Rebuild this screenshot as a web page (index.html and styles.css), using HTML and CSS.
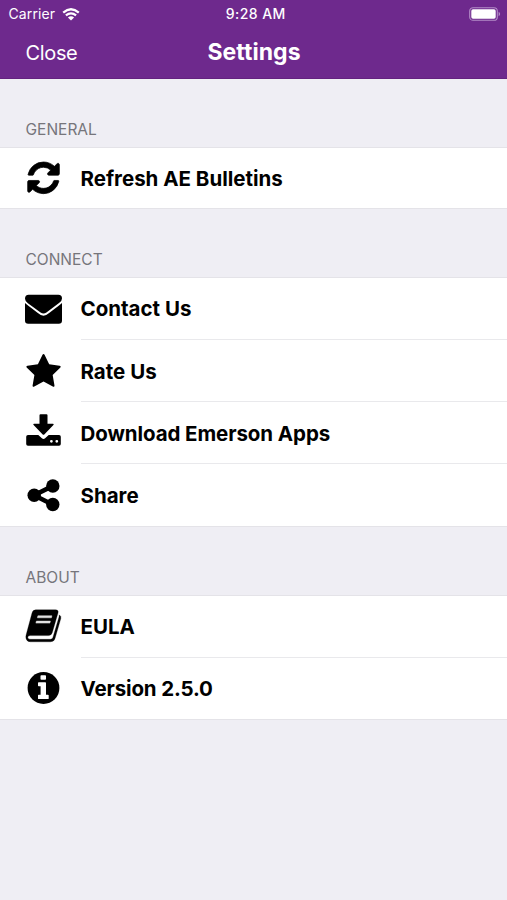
FILE: index.html
```html
<!DOCTYPE html>
<html lang="en">
<head>
<meta charset="utf-8">
<title>Settings</title>
<link rel="stylesheet" href="styles.css">
</head>
<body>
<header class="header">
  <div class="status">
    <div class="carrier"><span>Carrier</span>
      <svg class="wifi" viewBox="0 0 18 13"><path d="M1.2 4.600Q9-2 16.800 4.600M3.900 7.400q5.100-4.100 10.200 0" fill="none" stroke="#fff" stroke-width="2.300"/><path d="M5.900 9.600q3.100-2.500 6.200 0L9 12.600z" fill="#fff"/></svg>
    </div>
    <time class="time">9:28 AM</time>
    <svg class="battery" viewBox="0 0 32 14"><rect x=".7" y=".7" width="27.600" height="12.600" rx="3.400" fill="none" stroke="#b48dc8" stroke-width="1.100"/><rect x="2.300" y="2.300" width="24.400" height="9.400" rx="1.700" fill="#fff"/><path d="M29.600 4.800q1.500.7 1.500 2.200t-1.500 2.200z" fill="#b48dc8"/></svg>
  </div>
  <nav class="nav"><a class="close">Close</a><h1 class="title">Settings</h1></nav>
</header>
<main>
  <h2 class="label">GENERAL</h2>
  <ul class="list single">
    <li class="row"><svg class="icon" viewBox="0.500 0 40 40"><path transform="translate(4.200 4) scale(.0206)" d="M1511 928q0 5-1 7-64 268-268 434.500t-478 166.500q-146 0-282.500-55t-243.500-157l-129 129q-19 19-45 19t-45-19-19-45v-448q0-26 19-45t45-19h448q26 0 45 19t19 45-19 45l-137 137q71 66 161 102t187 36q134 0 250-65t186-179q11-17 53-117 8-23 30-23h192q13 0 22.500 9.500t9.500 22.500zm25-800v448q0 26-19 45t-45 19h-448q-26 0-45-19t-19-45 19-45l138-138q-148-137-349-137-134 0-250 65t-186 179q-11 17-53 117-8 23-30 23h-199q-13 0-22.500-9.500t-9.500-22.500v-7q65-268 270-434.500t480-166.500q146 0 284 55.500t245 156.500l130-129q19-19 45-19t45 19 19 45z" stroke="#000" stroke-width="36"/></svg><span class="text refresh">Refresh AE Bulletins</span></li>
  </ul>
  <h2 class="label">CONNECT</h2>
  <ul class="list four">
    <li class="row"><svg class="icon" viewBox="0.500 -.3 40 40"><path d="M1.500 9.500q0-4 3.700-4h29.700q3.600 0 3.600 3.600 0 2.600-3 4.600L22.900 23.200q-2.900 2-5.800 0L4.400 13.900Q1.500 11.800 1.500 9.500z"/><path d="M1.500 13.800q1 1 12.500 9.700 3.500 3 6 3t6-3Q37.500 14.800 38.500 13.800v17.500q0 3.200-3.200 3.200H4.700q-3.200 0-3.200-3.200z"/></svg><span class="text contact">Contact Us</span></li>
    <li class="row"><svg class="icon" viewBox="0.500 0 40 40"><path transform="translate(2.900 3) scale(.0206)" d="M1664 615q0 22-26 48l-363 354 86 500q1 7 1 20 0 21-10.500 35.500t-30.500 14.500q-19 0-40-12l-449-236-449 236q-22 12-40 12-21 0-31.500-14.500t-10.500-35.500q0-6 2-20l86-500-364-354q-25-27-25-48 0-37 56-46l502-73 225-455q19-41 49-41t49 41l225 455 502 73q56 9 56 46z"/></svg><span class="text rate">Rate Us</span></li>
    <li class="row"><svg class="icon" viewBox="0.500 0 40 40"><path d="M17 1.200h6q1 0 1 1v8.600h5.200q1.800 0 .7 1.300l-9.100 9.300q-.8.800-1.600 0l-9.100-9.300q-1.100-1.300.7-1.300H16V2.200q0-1 1-1z"/><path fill-rule="evenodd" d="M4.500 22h10.300l3.600 3.300q1.600 1.400 3.200 0L25.200 22h10.300q1.800 0 1.800 1.800v7.100q0 1.800-1.800 1.800h-31q-1.800 0-1.800-1.800v-7.100Q2.700 22 4.500 22zM26.500 28.300a1.400 1.400 0 1 0 2.800 0a1.400 1.400 0 1 0-2.800 0zM31.900 28.300a1.400 1.400 0 1 0 2.800 0a1.400 1.400 0 1 0-2.800 0z"/></svg><span class="text download">Download Emerson Apps</span></li>
    <li class="row"><svg class="icon" viewBox="0.500 -.3 40 40"><path d="M29.400 10.600 10.700 20l18.700 9.400" fill="none" stroke="#000" stroke-width="4.600"/><circle cx="10.700" cy="20" r="6.700"/><circle cx="29.300" cy="10.700" r="6.700"/><circle cx="29.300" cy="29.200" r="6.700"/></svg><span class="text share">Share</span></li>
  </ul>
  <h2 class="label">ABOUT</h2>
  <ul class="list two">
    <li class="row"><svg class="icon" viewBox="0.800 0 40 40"><g transform="translate(0 -.9)"><path d="M12.600 3.700h19.700q3.300 0 2.500 3.100L29.100 26.500q-.8 3-3.800 3H7q-2.400 0-2.400 1.600 0 2.100 3 2.100h19.800q1.700 0 2.300-1.800l6.100-20.600q.3-1 .2-2.100 2.400 1.400 1.600 3.800l-5.800 19.900q-1 3.300-4.500 3.300H7.300q-3.600 0-4.500-3.400-.4-1.600.1-3.300L8.800 6.900q.9-3.200 3.800-3.200z" stroke="#000" stroke-width=".3"/><path d="M14.700 9.700h14l-.5 2H14.200zM13.200 15h14l-.5 2H12.700z" fill="#e2e2e2" stroke="#e2e2e2" stroke-width=".5"/></g></svg><span class="text eula">EULA</span></li>
    <li class="row"><svg class="icon" viewBox="0.500 0 40 40"><circle cx="20" cy="20" r="15.900"/><path transform="translate(0 .3)" d="M17.800 6.900h3.900q.8 0 .8.700v3q0 .8-.8.800h-3.900q-.8 0-.8-.8v-3q0-.7.800-.7zM15.200 13.900h6.600q.7 0 .7.700v11.800h1.900q.8 0 .8.700v3q0 .7-.8.700h-9.200q-.7 0-.7-.7v-3q0-.7.700-.7h1.900v-8.400h-1.900q-.7 0-.7-.7v-2.700q0-.7.700-.7z" fill="#fff"/></svg><span class="text version">Version 2.5.0</span></li>
  </ul>
</main>
</body>
</html>
```
FILE: styles.css
```css
* { box-sizing: border-box; }
body { margin: 0; height: 900px; background: #efeef4; font-family: Inter, "Liberation Sans", sans-serif; color: #000; overflow: hidden; }
.header { height: 79px; background: #6e298d; color: #fff; border-bottom: 1px solid #64227f; }
.status { height: 28px; display: grid; grid-template-columns: 1fr auto 1fr; align-items: center; padding: 0 6px 0 8.5px; font-size: 14px; line-height: 28px; }
.carrier { display: flex; align-items: center; gap: 6.5px; letter-spacing: .1px; }
.wifi { width: 18px; height: 13px; }
.time { font-weight: 500; font-size: 14px; letter-spacing: .45px; margin-left: 2px; }
.battery { width: 32px; height: 14px; justify-self: end; }
.nav { height: 50px; display: grid; grid-template-columns: 1fr auto 1fr; align-items: center; padding: 0 25.5px; line-height: 48px; }
.close { font-size: 20px; letter-spacing: -.35px; }
.title { margin: 0 0 0 1px; font-size: 23px; font-weight: 650; line-height: 47px; letter-spacing: .05px; padding-bottom: 1px; }
.label { margin: 0; height: 69px; padding: 40px 25.5px 0; font-size: 15.5px; font-weight: 400; line-height: 22px; color: #76757b; border-bottom: 1px solid #e4e3e8; }
.list { margin: 0; padding: 0; list-style: none; background: #fff; border-bottom: 1px solid #e4e3e8; display: grid; grid-auto-rows: 1fr; }
.single { height: 61px; }
.four { height: 249px; }
.two { height: 124px; }
.row { display: grid; grid-template-columns: 57px 1fr; padding-left: 23.5px; align-items: stretch; }
.icon { width: 40px; height: 40px; align-self: center; }
.text { display: flex; align-items: center; font-size: 20.5px; font-weight: 650; border-bottom: 1px solid #e9e9ec; white-space: nowrap; }
.contact { padding-top: 0; }
.rate, .download { padding-top: 1px; }
.row:last-child .text { border-bottom: 0; }
.version { letter-spacing: -.15px; }
.download { letter-spacing: -.08px; }
```
